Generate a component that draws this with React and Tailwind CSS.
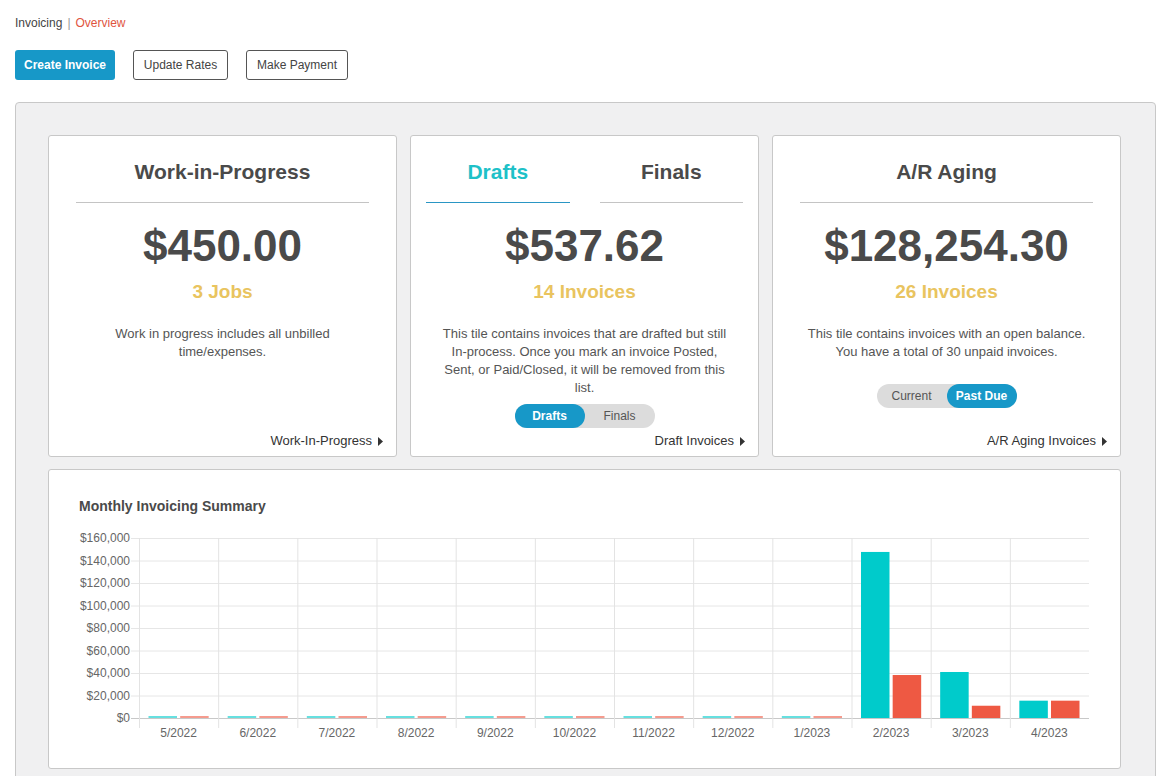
import React from "react";

const font = { fontFamily: '"Liberation Sans", Arial, sans-serif' };

function Arrow() {
  return (
    <svg width="5" height="9" viewBox="0 0 5 9" className="ml-[6px] inline-block">
      <path d="M0 0 L5 4.5 L0 9 Z" fill="#333" />
    </svg>
  );
}

function FooterLink({ children }) {
  return (
    <div className="mt-auto flex items-center justify-end pr-[13px] pb-[7px] text-[13px] leading-[16px] text-[#333]">
      <span>{children}</span>
      <Arrow />
    </div>
  );
}

function Amount({ value, sub }) {
  return (
    <>
      <div className="mt-[18px] text-center text-[44px] font-bold leading-[50px] text-[#4a4a4a]">{value}</div>
      <div className="mt-[10px] text-center text-[19px] font-bold leading-[22px] text-[#e9c45f]">{sub}</div>
    </>
  );
}

function Desc({ children }) {
  return (
    <div className="mx-auto mt-[22px] w-[296px] text-center text-[13px] leading-[18px] text-[#555]">{children}</div>
  );
}

function Toggle({ left, right, active }) {
  return (
    <div className="mx-auto flex h-[24px] w-[140px] rounded-full bg-[#dcdcdc] text-[12px] leading-[24px]">
      <div
        className={
          "flex-1 rounded-full text-center " +
          (active === 0 ? "bg-[#1798c8] font-bold text-white" : "text-[#555]")
        }
      >
        {left}
      </div>
      <div
        className={
          "flex-1 rounded-full text-center " +
          (active === 1 ? "bg-[#1798c8] font-bold text-white" : "text-[#555]")
        }
      >
        {right}
      </div>
    </div>
  );
}

const card = "flex h-[322px] w-[349px] flex-col rounded-[3px] border border-[#c8c8c8] bg-white";

function Chart() {
  const months = ["5/2022", "6/2022", "7/2022", "8/2022", "9/2022", "10/2022", "11/2022", "12/2022", "1/2023", "2/2023", "3/2023", "4/2023"];
  const teal = [0, 0, 0, 0, 0, 0, 0, 0, 0, 147600, 40900, 15400];
  const red = [0, 0, 0, 0, 0, 0, 0, 0, 0, 38200, 10900, 15400];
  const L = 90, R = 1040, T = 16, B = 196;
  const cw = (R - L) / 12;
  const yOf = (v) => B - (v / 160000) * (B - T);
  const ticks = [160000, 140000, 120000, 100000, 80000, 60000, 40000, 20000, 0];
  const fmt = (v) => "$" + v.toLocaleString("en-US");
  const bw = cw * 0.8 * 0.5 * 0.9;
  return (
    <svg width="1071" height="240" className="mt-[8px] block" style={font}>
      {ticks.map((t) => (
        <g key={t}>
          <line x1={82} x2={R} y1={yOf(t) + 0.5} y2={yOf(t) + 0.5} stroke={t === 0 ? "#c8c8c8" : "#e6e6e6"} strokeWidth="1" />
          <text x={81} y={yOf(t) + 4} textAnchor="end" fontSize="12" fill="#666">
            {fmt(t)}
          </text>
        </g>
      ))}
      {Array.from({ length: 12 }).map((_, i) => (
        <line key={i} x1={L + i * cw + 0.5} x2={L + i * cw + 0.5} y1={T} y2={B + 10} stroke="#e3e3e3" strokeWidth="1" />
      ))}
      {months.map((m, i) => {
        const start = L + i * cw;
        const c1 = start + cw * 0.1 + cw * 0.2;
        const c2 = start + cw * 0.1 + cw * 0.6;
        const tv = teal[i];
        const rv = red[i];
        const th = Math.max(2, B - yOf(tv));
        const rh = Math.max(2, B - yOf(rv));
        return (
          <g key={m}>
            <rect x={c1 - bw / 2} y={B - th} width={bw} height={th} fill="#00cbcb" opacity={tv ? 1 : 0.6} />
            <rect x={c2 - bw / 2} y={B - rh} width={bw} height={rh} fill="#ee5943" opacity={rv ? 1 : 0.6} />
            <text x={start + cw / 2} y={215} textAnchor="middle" fontSize="12" fill="#666">
              {m}
            </text>
          </g>
        );
      })}
    </svg>
  );
}

export default function App() {
  return (
    <div className="min-h-[800px] bg-white pb-[20px]" style={font}>
      <div className="flex items-center pl-[15px] pt-[16px] text-[12px] leading-[14px]">
        <span className="text-[#444]">Invoicing</span>
        <span className="mx-[5px] text-[#999]">|</span>
        <span className="text-[#e0543e]">Overview</span>
      </div>
      <div className="mt-[20px] flex items-center pl-[15px] text-[12px]">
        <button className="h-[30px] w-[100px] rounded-[3px] bg-[#1798c8] font-bold text-white">Create Invoice</button>
        <button className="ml-[18px] h-[30px] w-[95px] rounded-[3px] border border-[#555] bg-white text-[#444]">Update Rates</button>
        <button className="ml-[18px] h-[30px] w-[102px] rounded-[3px] border border-[#555] bg-white text-[#444]">Make Payment</button>
      </div>
      <div className="ml-[15px] mt-[22px] w-[1141px] rounded-[4px] border border-[#c8c8c8] bg-[#f0f0f1] pb-[32px] pl-[32px] pt-[32px]">
        <div className="flex w-[1073px] gap-[13px]">
          <div className={card}>
            <div className="mx-[27px] mt-[24px] border-b border-[#c4c4c4] pb-[18px] text-center text-[21px] font-bold leading-[24px] text-[#4a4a4a]">
              Work-in-Progress
            </div>
            <Amount value="$450.00" sub="3 Jobs" />
            <Desc>Work in progress includes all unbilled time/expenses.</Desc>
            <FooterLink>Work-In-Progress</FooterLink>
          </div>
          <div className={card}>
            <div className="mx-[15px] mt-[24px] flex gap-[30px] text-center text-[21px] font-bold leading-[24px]">
              <div className="flex-1 border-b border-[#2a96c4] pb-[18px] text-[#1ec1c8]">Drafts</div>
              <div className="flex-1 border-b border-[#c4c4c4] pb-[18px] text-[#4a4a4a]">Finals</div>
            </div>
            <Amount value="$537.62" sub="14 Invoices" />
            <Desc>
              This tile contains invoices that are drafted but still In-process. Once you mark an invoice Posted, Sent, or Paid/Closed, it will be removed from this list.
            </Desc>
            <div className="mt-[7px]">
              <Toggle left="Drafts" right="Finals" active={0} />
            </div>
            <FooterLink>Draft Invoices</FooterLink>
          </div>
          <div className={card}>
            <div className="mx-[27px] mt-[24px] border-b border-[#c4c4c4] pb-[18px] text-center text-[21px] font-bold leading-[24px] text-[#4a4a4a]">
              A/R Aging
            </div>
            <Amount value="$128,254.30" sub="26 Invoices" />
            <Desc>
              This tile contains invoices with an open balance.
              <br />
              You have a total of 30 unpaid invoices.
            </Desc>
            <div className="mt-[23px]">
              <Toggle left="Current" right="Past Due" active={1} />
            </div>
            <FooterLink>A/R Aging Invoices</FooterLink>
          </div>
        </div>
        <div className="mt-[12px] h-[300px] w-[1073px] rounded-[3px] border border-[#c8c8c8] bg-white">
          <div className="pl-[30px] pt-[28px] text-[14px] font-bold leading-[16px] text-[#4a4a4a]">Monthly Invoicing Summary</div>
          <Chart />
        </div>
      </div>
    </div>
  );
}
